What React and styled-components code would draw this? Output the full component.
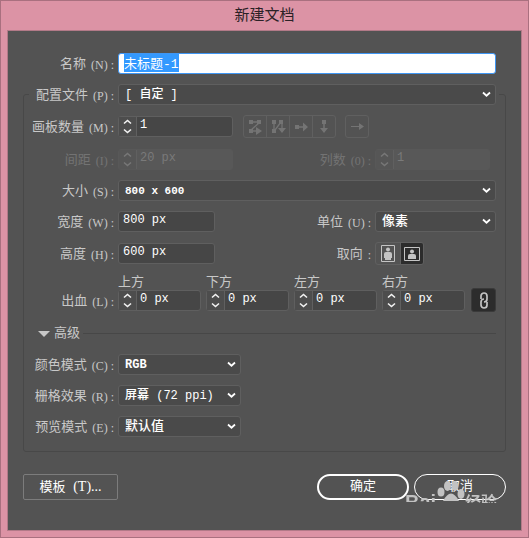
import React, { useEffect, useRef } from "react";
import styled, { createGlobalStyle, css } from "styled-components";

const GlobalStyle = createGlobalStyle`
  * { box-sizing: border-box; }
  body { margin: 0; background: #dc93a5; }
  body, button, input, select {
    font-family: "Liberation Mono", "Noto Sans CJK SC", monospace;
    font-size: 13px;
    line-height: 16px;
  }
`;

const Window = styled.main`
  display: flex;
  flex-direction: column;
  min-height: 100vh;
  padding: 0 6px 6px;
  border: 1px solid #a9707f;
  background: #dc93a5;
`;

const TitleBar = styled.h1`
  margin: 0;
  height: 29px;
  line-height: 32px;
  font-size: 15px;
  font-weight: 400;
  text-align: center;
  color: #2b2126;
`;

const Body = styled.form`
  flex: 1;
  padding: 22px 15px 24px;
  border: 1px solid #b27a88;
  background: #535353;
  color: #c8c8c8;
`;

const Row = styled.div`
  display: grid;
  grid-template-columns: ${(p) => p.$label || 90}px minmax(0, 1fr);
  column-gap: 4px;
  align-items: ${(p) => p.$align || "center"};
  margin-top: ${(p) => p.$top ?? 10}px;
  padding-right: ${(p) => p.$end ?? 9}px;
`;

const Fields = styled.div`
  display: flex;
  align-items: ${(p) => p.$align || "center"};
  gap: ${(p) => p.$gap || 0}px;
`;

const EndPair = styled.div`
  display: flex;
  align-items: center;
  gap: 4px;
  margin-left: auto;
`;

const EndSlot = styled.div`
  width: 121px;
`;

const LabelText = styled.label`
  display: flex;
  justify-content: flex-end;
  align-items: center;
  gap: 5px;
  padding-top: 2px;
  white-space: nowrap;
  line-height: 18px;
  color: ${(p) => (p.$muted ? "#737373" : "#c8c8c8")};
`;

const Key = styled.span`
  font-family: "Liberation Serif", serif;
  font-size: ${(p) => p.$size || 12}px;
`;

const sunken = css`
  border: 1px solid #5f5f5f;
  border-radius: 3px;
  background: #464646;
  color: #fff;
`;

const NameInput = styled.input`
  width: 100%;
  height: 21px;
  padding: 0 5px 3px;
  border: 1px solid #3f96f3;
  border-radius: 3px;
  background: #fff;
  color: #222;
  outline: none;
  &::selection { background: #3399ff; color: #fff; }
`;

const TextInput = styled.input`
  ${sunken}
  width: 97px;
  height: 21px;
  padding: 0 4px 3px;
  font-size: 12px;
  outline: none;
`;

const SpinnerBox = styled.div`
  ${sunken}
  display: flex;
  width: ${(p) => p.$width}px;
  height: 21px;
  ${(p) => p.$muted && "background: #585858; border-color: #585858;"}
`;

const Steps = styled.div`
  display: flex;
  flex-direction: column;
  width: 18px;
  border-right: 1px solid #606060;
  background: ${(p) => (p.$muted ? "#565656" : "#4d4d4d")};
`;

const Step = styled.button`
  display: flex;
  flex: 1;
  align-items: center;
  justify-content: center;
  padding: 0;
  border: 0;
  background: none;
  color: #f2f2f2;
  &:disabled { color: #777; }
`;

const SpinnerInput = styled.input`
  flex: 1;
  min-width: 0;
  padding: 0 3px 3px;
  border: 0;
  background: none;
  color: #fff;
  font-size: 12px;
  outline: none;
  &:disabled { color: #7a7a7a; }
`;

const SelectBox = styled.div`
  position: relative;
  width: ${(p) => p.$width || "100%"};
  color: #fff;
  & > svg {
    position: absolute;
    right: 5px;
    top: 7px;
    pointer-events: none;
  }
`;

const NativeSelect = styled.select`
  ${sunken}
  appearance: none;
  display: block;
  width: 100%;
  height: 21px;
  padding: 1px 18px 0 6px;
  background: #4a4a4a;
  font-size: ${(p) => p.$size || 13}px;
  font-weight: ${(p) => p.$weight || 500};
  outline: none;
`;

const Group = styled.fieldset`
  min-width: 0;
  margin: 10px 0 0;
  padding: 0 0 14px;
  border: 1px solid #484848;
  border-radius: 3px;
`;

const GroupLegend = styled.legend`
  width: calc(100% - 11px);
  margin: 0 5px;
  padding: 0;
`;

const Segment = styled.div`
  display: flex;
  margin-left: ${(p) => p.$start || 0}px;
  border: 1px solid #606060;
  border-radius: 3px;
  overflow: hidden;
`;

const SegmentButton = styled.button`
  display: grid;
  place-items: center;
  width: ${(p) => p.$width || 22}px;
  height: 21px;
  padding: 0;
  border: 0;
  background: ${(p) => (p["aria-pressed"] ? "#2c2c2c" : "none")};
  color: #c4c4c4;
  & + & { border-left: 1px solid #606060; width: 23px; }
  &:disabled { color: #747474; }
`;

const Bleed = styled.div`
  display: flex;
  flex-direction: column;
`;

const Caption = styled.label`
  line-height: 14px;
`;

const LinkButton = styled.button`
  display: grid;
  place-items: center;
  width: 25px;
  height: 24px;
  margin: 0 0 -1px 1px;
  padding: 0;
  border: 1px solid #3a3a3a;
  border-radius: 3px;
  background: #2c2c2c;
  color: #c4c4c4;
`;

const Advanced = styled.div`
  display: flex;
  align-items: center;
  gap: 3px;
  margin: 13px 9px 0 14px;
  &::after {
    content: "";
    flex: 1;
    height: 1px;
    background: #474747;
  }
`;

const Disclosure = styled.button`
  display: flex;
  align-items: center;
  gap: 4px;
  padding: 2px 0 0;
  border: 0;
  background: none;
  color: #c8c8c8;
`;

const Footer = styled.footer`
  display: flex;
  gap: 5px;
  margin-top: 22px;
`;

const TemplateButton = styled.button`
  width: 95px;
  height: 26px;
  margin-right: auto;
  padding: 0;
  border: 1px solid #7c7c7c;
  border-radius: 2px;
  background: none;
  color: #fff;
`;

const PillButton = styled.button`
  width: 92px;
  height: 26px;
  padding: 0;
  border: ${(p) => (p.$primary ? 2 : 1)}px solid #fff;
  border-radius: 13px;
  background: none;
  color: #fff;
`;

const CancelSlot = styled.div`
  position: relative;
`;

const Watermark = styled.div`
  position: absolute;
  left: -9px;
  top: 7px;
  display: flex;
  align-items: flex-start;
  pointer-events: none;
  white-space: nowrap;
  color: #c2c2c2;
  font: 700 20px/24px "Liberation Sans", "Noto Sans CJK SC", sans-serif;
`;

const MarkText = styled.span`
  width: 32px;
  margin-top: 9px;
  background: linear-gradient(#c2c2c2 12px, transparent 12px);
  background-clip: text;
  color: transparent;
`;

const MarkSuffix = styled.span`
  margin-top: 10px;
  background: linear-gradient(#c2c2c2 12px, transparent 12px);
  background-clip: text;
  color: transparent;
  font-size: 16px;
`;

const Chevron = () => (
  <svg width="9" height="7" viewBox="0 0 9 7" fill="none" stroke="currentColor" strokeWidth="1.8">
    <path d="M1 1.5 4.5 4.7 8 1.5" />
  </svg>
);

const StepArrow = ({ d }) => (
  <svg width="9" height="6" viewBox="0 0 9 6" fill="none" stroke="currentColor" strokeWidth="1.6">
    <path d={d} />
  </svg>
);

const gridIcons = {
  按行设置网格: (
    <>
      <path d="M1 1h4v4H1zM9 1h4v4H9zM1 10h4v4H1zM8 8l6 4-6 4z" />
      <path d="M4 3h6M11 4 3 11M4 12h5" stroke="currentColor" strokeWidth="1.3" />
    </>
  ),
  按列设置网格: (
    <>
      <path d="M1 1h4v4H1zM8 1h4v4H8zM1 10h4v4H1zM7 9h8l-4 5z" />
      <path d="M3 4v7M4 11l6-8M11 4v6" stroke="currentColor" strokeWidth="1.3" />
    </>
  ),
  按行排列: (
    <>
      <path d="M1 6h4v4H1zM9 3.500l5 4.500-5 4.500z" />
      <path d="M4 8h6" stroke="currentColor" strokeWidth="1.5" />
    </>
  ),
  按列排列: (
    <>
      <path d="M5 1h4v4H5zM3 9h8l-4 5z" />
      <path d="M7 4v6" stroke="currentColor" strokeWidth="1.5" />
    </>
  ),
};

const Label = ({ htmlFor, text, k, muted }) => (
  <LabelText htmlFor={htmlFor} $muted={muted}>
    <span>{text}</span>
    <Key>{k ? `(${k}) :` : ":"}</Key>
  </LabelText>
);

const Spinner = ({ id, value, width, muted }) => (
  <SpinnerBox $width={width} $muted={muted}>
    <Steps $muted={muted}>
      <Step type="button" aria-label="增加" disabled={muted}><StepArrow d="M1 4.500 4.500 1.500 8 4.500" /></Step>
      <Step type="button" aria-label="减少" disabled={muted}><StepArrow d="M1 1.500 4.500 4.500 8 1.500" /></Step>
    </Steps>
    <SpinnerInput id={id} defaultValue={value} disabled={muted} />
  </SpinnerBox>
);

const Select = ({ id, value, width, size, weight }) => (
  <SelectBox $width={width}>
    <NativeSelect id={id} defaultValue={value} $size={size} $weight={weight}>
      <option>{value}</option>
    </NativeSelect>
    <Chevron />
  </SelectBox>
);

const sides = [["top", "上方"], ["bottom", "下方"], ["left", "左方"], ["right", "右方"]];

const modes = [
  { id: "color", text: "颜色模式", k: "C", value: "RGB", size: 12, weight: 700, top: 12 },
  { id: "raster", text: "栅格效果", k: "R", value: "屏幕 (72 ppi)", size: 12 },
  { id: "preview", text: "预览模式", k: "E", value: "默认值" },
];

export default function App() {
  const nameRef = useRef(null);
  useEffect(() => {
    nameRef.current.focus();
    nameRef.current.select();
  }, []);

  return (
    <>
      <GlobalStyle />
      <Window>
        <TitleBar>新建文档</TitleBar>
        <Body onSubmit={(e) => e.preventDefault()}>
          <Row $label={91} $top={0} $end={10}>
            <Label htmlFor="name" text="名称" k="N" />
            <NameInput id="name" ref={nameRef} defaultValue="未标题-1" spellCheck={false} />
          </Row>
          <Group>
            <GroupLegend>
              <Row $label={85} $top={0} $end={3}>
                <Label htmlFor="profile" text="配置文件" k="P" />
                <Select id="profile" value="[ 自定 ]" size={12} />
              </Row>
            </GroupLegend>
            <Row>
              <Label htmlFor="boards" text="画板数量" k="M" />
              <Fields>
                <Spinner id="boards" value="1" width={115} />
                <Segment $start={10}>
                  {Object.entries(gridIcons).map(([name, art]) => (
                    <SegmentButton key={name} type="button" aria-label={name} disabled>
                      <svg width="15" height="16" viewBox="0 0 15 16" fill="currentColor">{art}</svg>
                    </SegmentButton>
                  ))}
                </Segment>
                <Segment $start={9}>
                  <SegmentButton type="button" aria-label="更改为从右至左的版面" disabled>
                    <svg width="14" height="9" viewBox="0 0 14 9" fill="currentColor">
                      <path d="M1 4h8V1l5 3.500L9 8V5H1z" />
                    </svg>
                  </SegmentButton>
                </Segment>
              </Fields>
            </Row>
            <Row $top={11}>
              <Label htmlFor="spacing" text="间距" k="I" muted />
              <Fields>
                <Spinner id="spacing" value="20 px" width={115} muted />
                <EndPair>
                  <Label htmlFor="columns" text="列数" k="0" muted />
                  <EndSlot><Spinner id="columns" value="1" width={115} muted /></EndSlot>
                </EndPair>
              </Fields>
            </Row>
            <Row>
              <Label htmlFor="size" text="大小" k="S" />
              <Select id="size" value="800 x 600" size={11} weight={700} />
            </Row>
            <Row>
              <Label htmlFor="width" text="宽度" k="W" />
              <Fields>
                <TextInput id="width" defaultValue="800 px" />
                <EndPair>
                  <Label htmlFor="units" text="单位" k="U" />
                  <Select id="units" value="像素" width="121px" />
                </EndPair>
              </Fields>
            </Row>
            <Row>
              <Label htmlFor="height" text="高度" k="H" />
              <Fields>
                <TextInput id="height" defaultValue="600 px" />
                <EndPair>
                  <Label htmlFor="portrait" text="取向" />
                  <EndSlot>
                    <Fields>
                      <Segment>
                        <SegmentButton id="portrait" type="button" aria-label="纵向" aria-pressed={false} $width={24}>
                          <svg width="14" height="17" viewBox="0 0 14 17" fill="currentColor">
                            <path d="M.5.500h13v16H.5z" fill="none" stroke="currentColor" />
                            <circle cx="7" cy="4.500" r="2" />
                            <path d="M3 9q0-2 2-2h4q2 0 2 2v4h-1v2H4v-2H3z" />
                          </svg>
                        </SegmentButton>
                        <SegmentButton type="button" aria-label="横向" aria-pressed={true}>
                          <svg width="16" height="14" viewBox="0 0 16 14" fill="currentColor">
                            <path d="M.5.500h15v13H.5z" fill="none" stroke="currentColor" />
                            <circle cx="8" cy="4.500" r="2" />
                            <path d="M4 12V9q0-2 2-2h4q2 0 2 2v3z" />
                          </svg>
                        </SegmentButton>
                      </Segment>
                    </Fields>
                  </EndSlot>
                </EndPair>
              </Fields>
            </Row>
            <Row $top={11} $align="end">
              <Label htmlFor="top" text="出血" k="L" />
              <Fields $gap={5} $align="end">
                {sides.map(([id, text]) => (
                  <Bleed key={id}>
                    <Caption htmlFor={id}>{text}</Caption>
                    <Spinner id={id} value="0 px" width={83} />
                  </Bleed>
                ))}
                <LinkButton type="button" aria-label="使所有设置相同" aria-pressed={true}>
                  <svg width="10" height="17" viewBox="0 0 10 17" fill="none" stroke="currentColor" strokeWidth="1.7">
                    <path d="M2 7V4a3 3 0 0 1 6 0v3a3 3 0 0 1-3 3" />
                    <path d="M8 10v3a3 3 0 0 1-6 0v-3a3 3 0 0 1 3-3" />
                  </svg>
                </LinkButton>
              </Fields>
            </Row>
            <Advanced>
              <Disclosure type="button" aria-expanded={true}>
                <svg width="12" height="6" viewBox="0 0 12 6" fill="currentColor"><path d="M0 0h12L6 6z" /></svg>
                高级
              </Disclosure>
            </Advanced>
            {modes.map((m) => (
              <Row key={m.id} $top={m.top}>
                <Label htmlFor={m.id} text={m.text} k={m.k} />
                <Select id={m.id} value={m.value} width="123px" size={m.size} weight={m.weight} />
              </Row>
            ))}
          </Group>
          <Footer>
            <TemplateButton type="button">模板 <Key $size={14}>(T)...</Key></TemplateButton>
            <PillButton type="submit" $primary>确定</PillButton>
            <CancelSlot>
              <PillButton type="button">取消</PillButton>
              <Watermark aria-hidden="true">
                <MarkText>Bai</MarkText>
                <svg width="28" height="20" viewBox="0 0 28 20" fill="currentColor">
                  <ellipse cx="4" cy="11" rx="3.500" ry="4.500" />
                  <ellipse cx="10.500" cy="5" rx="3.500" ry="5" />
                  <ellipse cx="18" cy="5" rx="3.500" ry="5" />
                  <ellipse cx="24" cy="13" rx="3.500" ry="5" />
                  <path d="M6 20q8-15 16 0z" />
                </svg>
                <MarkSuffix>经验</MarkSuffix>
              </Watermark>
            </CancelSlot>
          </Footer>
        </Body>
      </Window>
    </>
  );
}
